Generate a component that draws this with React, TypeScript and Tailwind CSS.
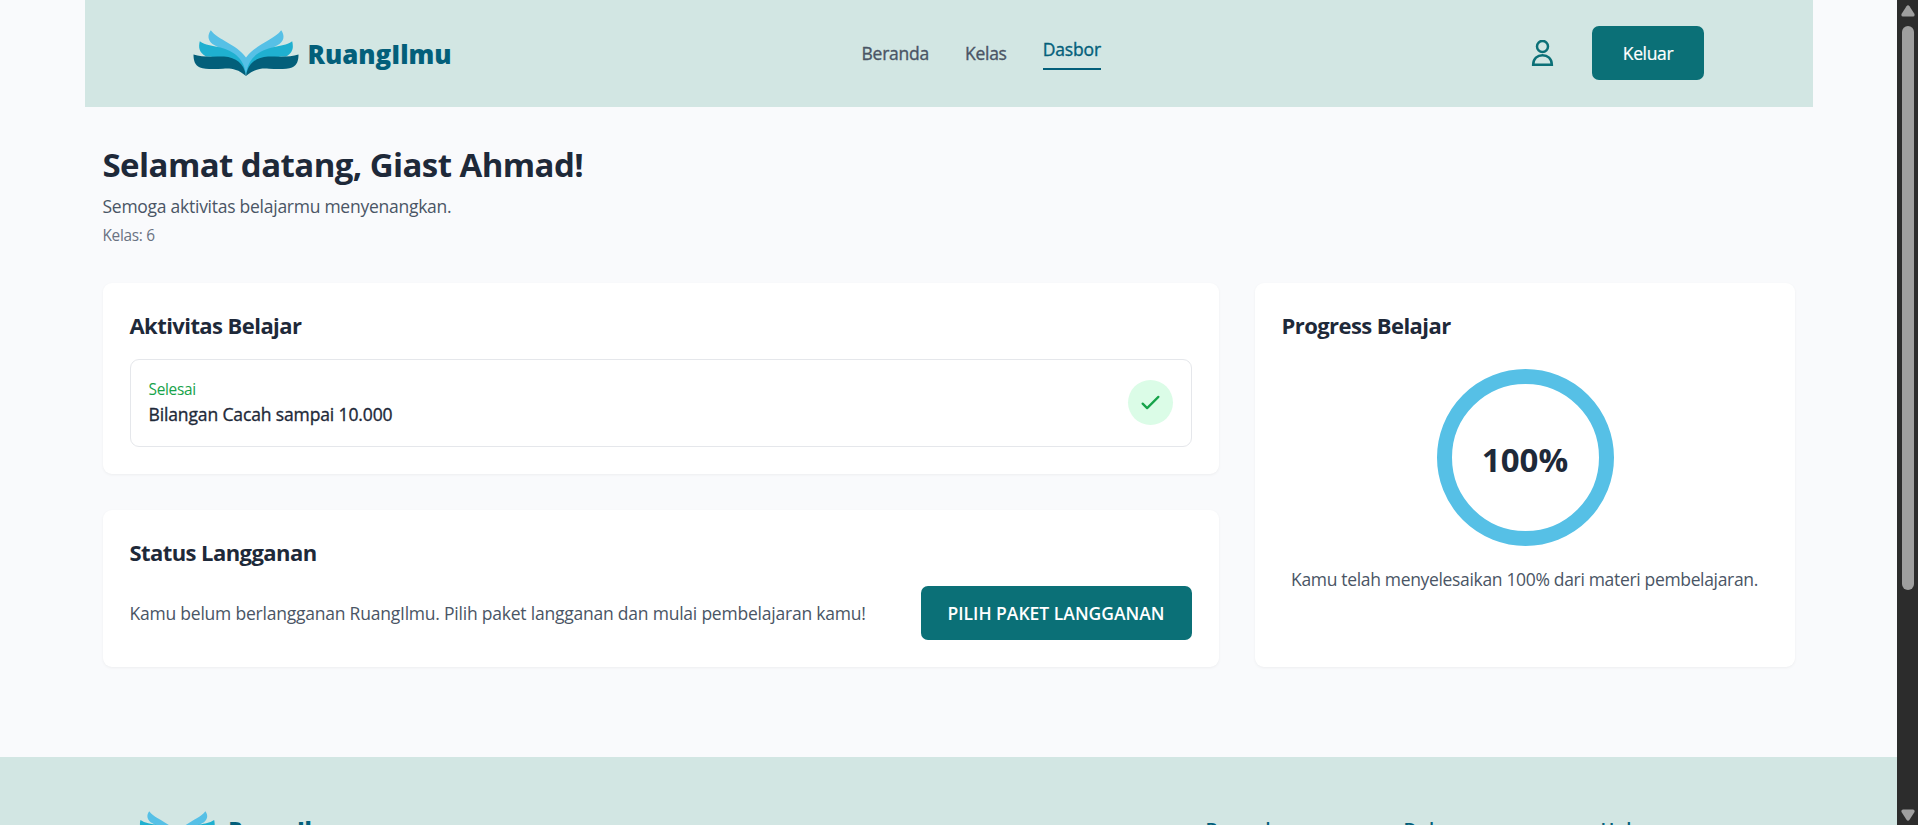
import { ReactNode } from "react";

function Wing() {
  return (
    <>
      <path fill="#56c0e6" d="M17.800 0.300C25 10 43 14 53 27.500V44C44 26 28 19 19.500 14C14.500 10 14.500 5 17.800 0.300Z" />
      <path fill="#1fb0d0" d="M6.800 11.300C13 15.500 18 15.500 25 17C38 20 51 26 53 45C46 34 38 27.500 13 26.500C5.500 22 5.500 17 6.800 11.300Z" />
      <path fill="#035f7a" d="M0.500 24.500C9 27.500 20 26.500 31 26.500C43 27.500 51 33 53 46C44 38 36 38.200 30 38.700C22 39.300 12 39.500 7 37.500C1.500 35 0.500 30 0.500 24.500Z" />
    </>
  );
}

function Book({ className }: { className: string }) {
  return (
    <svg viewBox="0 0 106 47" className={className} aria-hidden="true">
      <Wing />
      <g transform="translate(106 0) scale(-1 1)">
        <Wing />
      </g>
    </svg>
  );
}

function Card({ title, children, className = "" }: { title: string; children: ReactNode; className?: string }) {
  return (
    <section className={`rounded-[9px] bg-white p-[27px] shadow-[0_1px_3px_rgba(0,0,0,0.05)] ${className}`}>
      <h2 className="mb-[18px] h-[31px] text-[22px] leading-[31px] font-bold tracking-[-0.57px] whitespace-nowrap text-gray-800">{title}</h2>
      {children}
    </section>
  );
}

function Header() {
  return (
    <header className="mx-auto flex h-[107px] w-[1728px] items-center bg-[#d2e6e3] pr-[108.5px] pb-px pl-[108px]">
      <div className="flex w-[669px] items-center">
        <Book className="mt-px h-[47px] w-[106px]" />
        <span className="mt-[2px] ml-[9px] text-[25.800px] leading-[36px] font-extrabold text-[#035f7a]">RuangIlmu</span>
      </div>
      <nav className="flex items-center gap-[36px] text-[17.500px] leading-[27px] font-medium tracking-[-0.25px] text-gray-600 [-webkit-text-stroke:0.35px_currentColor]">
        <a>Beranda</a>
        <a>Kelas</a>
        <a className="mt-px mb-px border-b-2 border-[#035f7a] pb-[5px] tracking-[-0.15px] text-[#035f7a]">Dasbor</a>
      </nav>
      <div className="ml-auto flex items-center gap-[36px]">
        <svg viewBox="0 0 27 27" className="size-[27px]" fill="none" stroke="#0b7077" strokeWidth="2.500">
          <circle cx="13.500" cy="6.400" r="5.500" />
          <path d="M4.150 24.850C4.150 18.500 8.500 15.150 13.500 15.150S22.850 18.500 22.850 24.850Z" />
        </svg>
        <button className="h-[54px] w-[112px] rounded-[7px] bg-[#0b7077] text-[17.500px] font-medium tracking-[-0.35px] text-white [-webkit-text-stroke:0.2px_currentColor]">Keluar</button>
      </div>
    </header>
  );
}

function Footer() {
  return (
    <footer className="h-[68px] overflow-hidden bg-[#d2e6e3]">
      <div className="flex pt-[54px] pl-[135px] whitespace-nowrap">
        <Book className="h-[37.500px] w-[84.600px] shrink-0" />
        <span className="mt-[4px] ml-[9px] w-[977px] text-[21.200px] leading-[27px] font-extrabold text-[#035f7a]">RuangIlmu</span>
        <span className="mt-[4px] w-[198px] text-[18.500px] leading-[27px] font-semibold text-[#035f7a]">Beranda</span>
        <span className="mt-[4px] w-[197px] text-[18.500px] leading-[27px] font-semibold text-[#035f7a]">Dukungan</span>
        <span className="mt-[4px] text-[18.500px] leading-[27px] font-semibold text-[#035f7a]">Hukum</span>
      </div>
    </footer>
  );
}

function Scrollbar() {
  return (
    <div className="flex w-[21px] shrink-0 flex-col items-center bg-[#2c2c2c]">
      <svg viewBox="0 0 14 12" className="mt-[5px] h-[12px] w-[14px]" fill="#9f9f9f">
        <path d="M5.500 1.200Q7 -0.800 8.500 1.200L13.500 9Q14 11.500 12 11.500H2Q0 11.500 0.500 9Z" />
      </svg>
      <div className="mt-[9px] h-[564px] w-[12px] rounded-full bg-[#9f9f9f]" />
      <svg viewBox="0 0 14 12" className="mt-auto mb-[4px] h-[12px] w-[14px] rotate-180" fill="#9f9f9f">
        <path d="M5.500 1.200Q7 -0.800 8.500 1.200L13.500 9Q14 11.500 12 11.500H2Q0 11.500 0.500 9Z" />
      </svg>
    </div>
  );
}

export default function App() {
  return (
    <div className="flex h-screen w-full overflow-hidden bg-gray-50 font-['Open_Sans','Noto_Sans',sans-serif]">
      <div className="flex min-w-0 flex-1 flex-col bg-[#f9fafc]">
        <Header />
        <main className="mx-auto w-[1692px] flex-1 pt-[35px]">
          <h1 className="h-[45px] text-[33px] leading-[45px] font-bold tracking-[-0.57px] whitespace-nowrap text-gray-800">Selamat datang, Giast Ahmad!</h1>
          <p className="mt-[6px] h-[27px] text-[17.500px] leading-[27px] tracking-[-0.26px] text-gray-600">Semoga aktivitas belajarmu menyenangkan.</p>
          <p className="mt-[4px] h-[23px] text-[15.400px] leading-[23px] tracking-[-0.3px] text-gray-500">Kelas: 6</p>
          <div className="mt-[36px] grid grid-cols-3 gap-[36px]">
            <div className="col-span-2 flex flex-col gap-[36px]">
              <Card title="Aktivitas Belajar" className="h-[191px]">
                <div className="flex h-[88px] items-center justify-between rounded-[9px] border border-gray-200 px-[18px]">
                  <div>
                    <p className="text-[15.400px] leading-[23px] tracking-[-0.3px] text-[#16a34a]">Selesai</p>
                    <p className="text-[17.500px] leading-[27px] font-medium tracking-[-0.13px] text-gray-800 [-webkit-text-stroke:0.35px_currentColor]">Bilangan Cacah sampai 10.000</p>
                  </div>
                  <div className="mb-px flex size-[45px] items-center justify-center rounded-full bg-green-100">
                    <svg viewBox="0 0 24 24" className="size-[27px]" fill="none" stroke="#16a34a" strokeWidth="2" strokeLinecap="round" strokeLinejoin="round">
                      <path d="M5 13l4 4L19 7" />
                    </svg>
                  </div>
                </div>
              </Card>
              <Card title="Status Langganan" className="h-[157px]">
                <div className="flex items-center justify-between">
                  <p className="text-[17.500px] leading-[27px] tracking-[-0.22px] text-gray-600">Kamu belum berlangganan RuangIlmu. Pilih paket langganan dan mulai pembelajaran kamu!</p>
                  <button className="h-[54px] w-[271px] rounded-[7px] bg-[#0b7077] text-[17.500px] font-semibold whitespace-nowrap text-white">PILIH PAKET LANGGANAN</button>
                </div>
              </Card>
            </div>
            <Card title="Progress Belajar">
              <div className="flex flex-col items-center">
                <div className="mt-[10px] ml-px flex size-[177px] items-center justify-center rounded-full border-[15px] border-[#56c0e6]">
                  <span className="mt-[3px] text-[33px] leading-[45px] font-bold text-gray-800">100%</span>
                </div>
                <p className="mt-[20px] text-[17.500px] leading-[27px] tracking-[-0.33px] whitespace-nowrap text-gray-600">Kamu telah menyelesaikan 100% dari materi pembelajaran.</p>
              </div>
            </Card>
          </div>
        </main>
        <Footer />
      </div>
      <Scrollbar />
    </div>
  );
}
